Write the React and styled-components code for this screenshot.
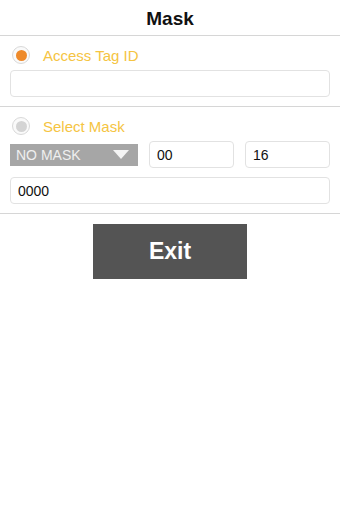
import React from "react";
import styled, { createGlobalStyle } from "styled-components";

const GlobalStyle = createGlobalStyle`
  html, body {
    margin: 0;
    padding: 0;
    background: #ffffff;
    font-family: "Liberation Sans", Arial, sans-serif;
  }
`;

const Page = styled.div`
  width: 340px;
  min-height: 510px;
  background: #ffffff;
`;

const Header = styled.div`
  height: 36px;
  box-sizing: border-box;
  padding-top: 3px;
  display: flex;
  align-items: center;
  justify-content: center;
  font-size: 19px;
  font-weight: bold;
  color: #111;
  border-bottom: 1px solid #d6d6d6;
`;

const Section = styled.div`
  padding: 8px 10px 9px 10px;
  border-bottom: 1px solid #d6d6d6;
  display: flex;
  flex-direction: column;
  gap: 4px;
`;

const RadioRow = styled.div`
  display: flex;
  align-items: center;
  height: 22px;
  gap: 13px;
  padding-left: 2px;
`;

const Radio = styled.span`
  width: 18px;
  height: 18px;
  box-sizing: border-box;
  border-radius: 50%;
  border: 1px solid #d9d9d9;
  background: #fafafa;
  display: flex;
  align-items: center;
  justify-content: center;

  &::after {
    content: "";
    width: 11px;
    height: 11px;
    border-radius: 50%;
    background: ${({ $checked }) => ($checked ? "#ee8a2a" : "#d4d4d4")};
  }
`;

const Label = styled.span`
  color: #f5c442;
  font-size: 15px;
`;

const Field = styled.div`
  height: 27px;
  box-sizing: border-box;
  border: 1px solid #e2e2e2;
  border-radius: 4px;
  background: #fff;
  display: flex;
  align-items: center;
  padding-left: 7px;
  font-size: 14px;
  color: #111;
  flex: ${({ $flex }) => $flex || "none"};
  width: ${({ $width }) => ($width ? `${$width}px` : "auto")};
`;

const MaskRow = styled.div`
  display: flex;
  align-items: center;
  gap: 11px;
  margin-bottom: 5px;
`;

const Select = styled.div`
  width: 128px;
  height: 22px;
  background: #a6a6a6;
  display: flex;
  align-items: center;
  justify-content: space-between;
  padding: 0 9px 0 6px;
  box-sizing: border-box;
  color: #efefef;
  font-size: 14px;
`;

const ButtonWrap = styled.div`
  display: flex;
  justify-content: center;
  padding-top: 10px;
`;

const ExitButton = styled.button`
  width: 154px;
  height: 55px;
  border: none;
  background: #545454;
  color: #fff;
  font-family: "Liberation Sans", Arial, sans-serif;
  font-size: 23px;
  font-weight: bold;
`;

export default function App() {
  return (
    <Page>
      <GlobalStyle />
      <Header>Mask</Header>
      <Section>
        <RadioRow>
          <Radio $checked />
          <Label>Access Tag ID</Label>
        </RadioRow>
        <Field />
      </Section>
      <Section>
        <RadioRow>
          <Radio />
          <Label>Select Mask</Label>
        </RadioRow>
        <MaskRow>
          <Select>
            NO MASK
            <svg width="16" height="9" viewBox="0 0 16 9">
              <path d="M0 0 L16 0 L8 9 Z" fill="#f4f4f4" />
            </svg>
          </Select>
          <Field $width={85}>00</Field>
          <Field $flex="1">16</Field>
        </MaskRow>
        <Field>0000</Field>
      </Section>
      <ButtonWrap>
        <ExitButton>Exit</ExitButton>
      </ButtonWrap>
    </Page>
  );
}
